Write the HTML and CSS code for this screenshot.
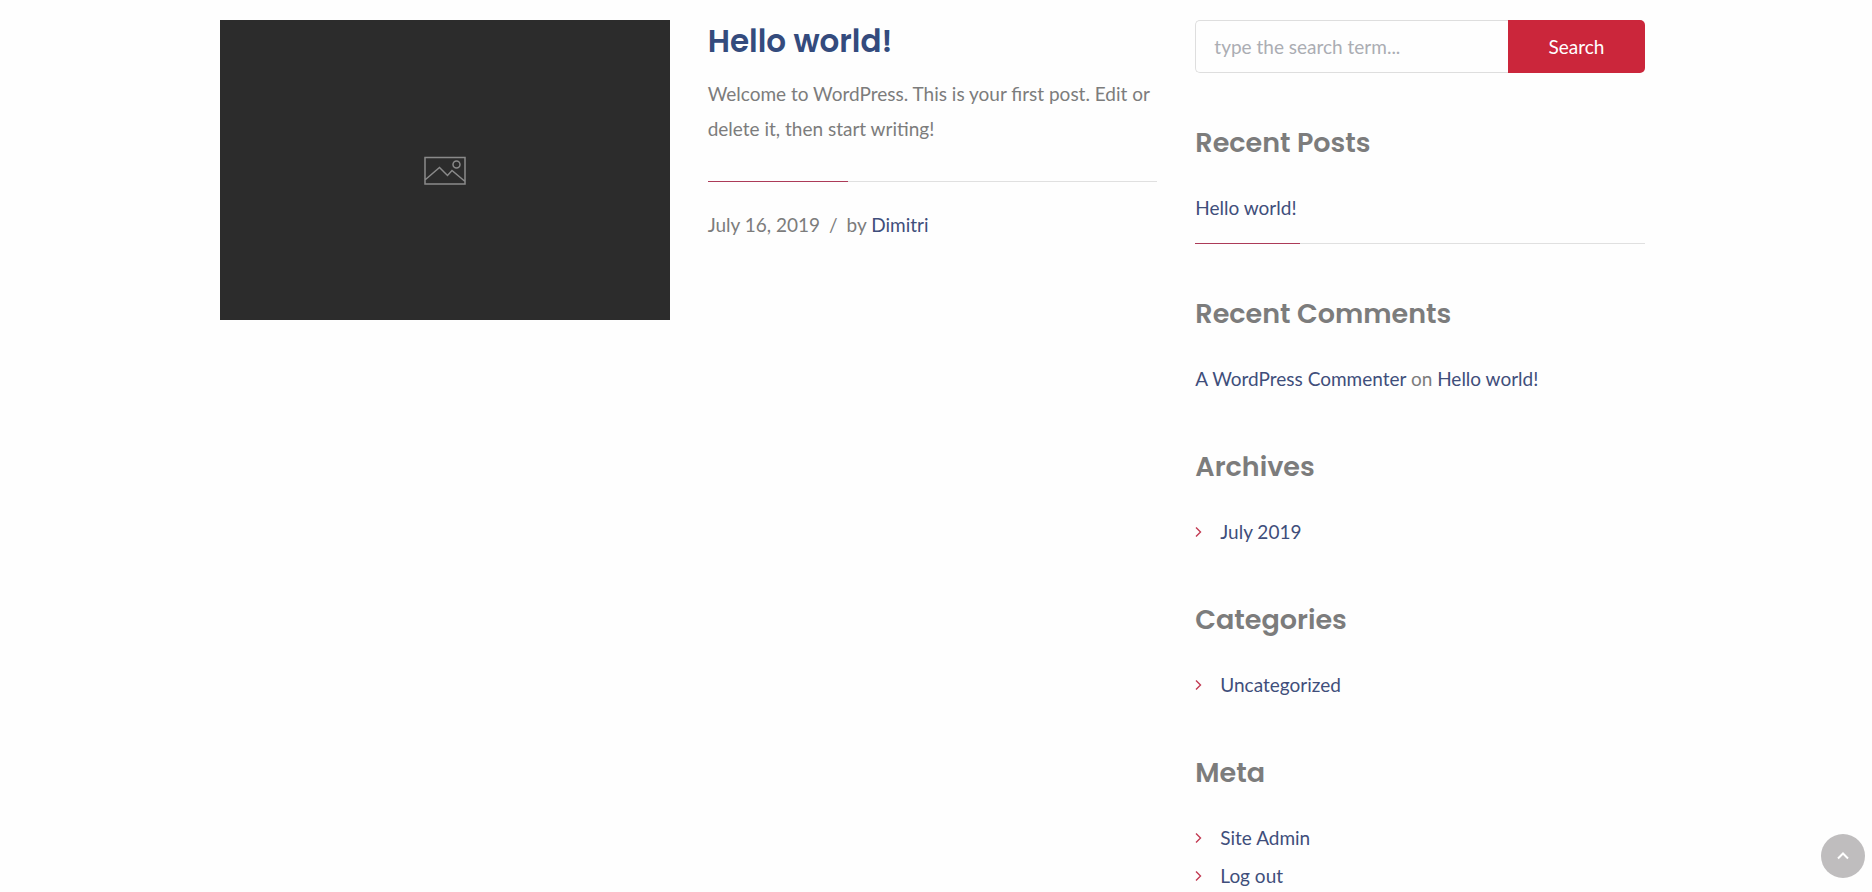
FILE: index.html
```html
<!DOCTYPE html>
<html lang="en">
<head>
<meta charset="utf-8">
<meta name="viewport" content="width=device-width, initial-scale=1">
<title>Blog</title>
<link rel="stylesheet" href="styles.css">
</head>
<body>
<svg class="sprite" aria-hidden="true">
  <symbol id="chevron" viewBox="0 0 7 12"><path d="M1 1.500 5.500 6 1 10.500" fill="none" stroke="currentColor" stroke-width="1.400"/></symbol>
</svg>
<div class="container">
  <main class="posts">
    <article class="post">
      <a class="thumb" href="#" aria-label="Hello world!">
        <svg class="thumb-icon" viewBox="0 0 42 30" fill="none" stroke="currentColor" stroke-width="1.500">
          <path d="M1 2.500H41V29H1Z M1.500 24.500 15.500 12.500 23.500 20.500 28 15.500 40.500 26"/>
          <circle cx="32.500" cy="9.500" r="3.500"/>
        </svg>
      </a>
      <div class="post-body">
        <h2 class="post-title"><a href="#">Hello world!</a></h2>
        <p class="excerpt">Welcome to WordPress. This is your first post. Edit or delete it, then start writing!</p>
        <div class="post-meta"><time datetime="2019-07-16">July 16, 2019</time><span class="slash">/</span><span>by <a href="#">Dimitri</a></span></div>
      </div>
    </article>
  </main>
  <aside class="sidebar">
    <form class="search">
      <input class="search-input" type="search" placeholder="type the search term..." aria-label="Search term">
      <button class="search-button" type="submit">Search</button>
    </form>
    <section class="widget">
      <h3 class="widget-title">Recent Posts</h3>
      <ul class="list list-ruled"><li><a href="#">Hello world!</a></li></ul>
    </section>
    <section class="widget">
      <h3 class="widget-title">Recent Comments</h3>
      <ul class="list"><li><a href="#">A WordPress Commenter</a> on <a href="#">Hello world!</a></li></ul>
    </section>
    <section class="widget">
      <h3 class="widget-title">Archives</h3>
      <ul class="list list-arrows"><li><svg class="chevron" aria-hidden="true"><use href="#chevron"/></svg><a href="#">July 2019</a></li></ul>
    </section>
    <section class="widget">
      <h3 class="widget-title">Categories</h3>
      <ul class="list list-arrows"><li><svg class="chevron" aria-hidden="true"><use href="#chevron"/></svg><a href="#">Uncategorized</a></li></ul>
    </section>
    <section class="widget">
      <h3 class="widget-title">Meta</h3>
      <ul class="list list-arrows">
        <li><svg class="chevron" aria-hidden="true"><use href="#chevron"/></svg><a href="#">Site Admin</a></li>
        <li><svg class="chevron" aria-hidden="true"><use href="#chevron"/></svg><a href="#">Log out</a></li>
      </ul>
    </section>
  </aside>
</div>
<button class="to-top" type="button" aria-label="Back to top">
  <svg viewBox="0 0 12 8" fill="none" stroke="currentColor" stroke-width="2"><path d="M1 6.500 6 1.500 11 6.500"/></svg>
</button>
</body>
</html>
```
FILE: styles.css
```css
* { box-sizing: border-box; }
body {
  margin: 0;
  padding: 20px 27px 0 20px;
  background: #fefefe;
  color: #7c7c7c;
  font: 19px/35px Lato, "Liberation Sans", sans-serif;
}
h2, h3, p, ul { margin: 0; padding: 0; }
a { color: #3f4e7b; text-decoration: none; }
.sprite { display: none; }
.container {
  display: grid;
  grid-template-columns: repeat(3, 1fr);
  gap: 38px;
  max-width: 1425px;
  margin: 0 auto;
}
.posts { grid-column: span 2; }
.post { display: grid; grid-template-columns: 1fr 1fr; gap: 38px; align-items: start; }
.thumb {
  display: flex;
  align-items: center;
  justify-content: center;
  aspect-ratio: 3 / 2;
  background: #2c2c2c;
  color: #8a8a8a;
}
.thumb-icon { width: 42px; height: 30px; }
.post-title, .widget-title { font-family: Poppins, Inter, sans-serif; font-weight: 600; }
.post-title { margin-bottom: 14px; font-size: 31px; line-height: 42px; }
.post-title a { color: #344b7d; }
.post-meta { margin-top: 35px; padding-top: 26px; }
.post-meta, .list-ruled li {
  background:
    linear-gradient(#ac3b58, #ac3b58) 0 0 / 140px 1px no-repeat,
    linear-gradient(#e0e0e0, #e0e0e0) 0 0 / 100% 1px no-repeat;
}
.slash { margin: 0 9px; }
.search { display: flex; height: 53px; margin-bottom: 50px; }
.search-input {
  flex: 1;
  min-width: 0;
  padding: 0 18px;
  border: 1px solid #dedede;
  border-right: 0;
  border-radius: 5px 0 0 5px;
  background: #fefefe;
  color: inherit;
  font: inherit;
}
.search-input::placeholder { color: #abadb3; opacity: 1; }
.search-button {
  width: 137px;
  border: 0;
  border-radius: 0 5px 5px 0;
  background: #cb263b;
  color: #fff;
  font: inherit;
}
.widget { margin-bottom: 49px; }
.widget:last-child { margin-bottom: 0; }
.widget-title { margin-bottom: 26px; font-size: 27px; line-height: 40px; color: #7c7c7c; }
.list { list-style: none; line-height: 38px; }
.list-ruled li { padding-bottom: 18px; background-position: 0 54px; background-size: 105px 1px, 100% 1px; }
.list-arrows li { display: flex; align-items: center; gap: 18px; }
.chevron { width: 7px; height: 12px; color: #c23a52; }
.to-top {
  position: fixed;
  right: 7px;
  bottom: 14px;
  display: flex;
  align-items: center;
  justify-content: center;
  width: 44px;
  height: 44px;
  padding: 0;
  border: 0;
  border-radius: 50%;
  background: #bfbdbe;
  color: #fff;
}
.to-top svg { width: 12px; height: 8px; }
```
